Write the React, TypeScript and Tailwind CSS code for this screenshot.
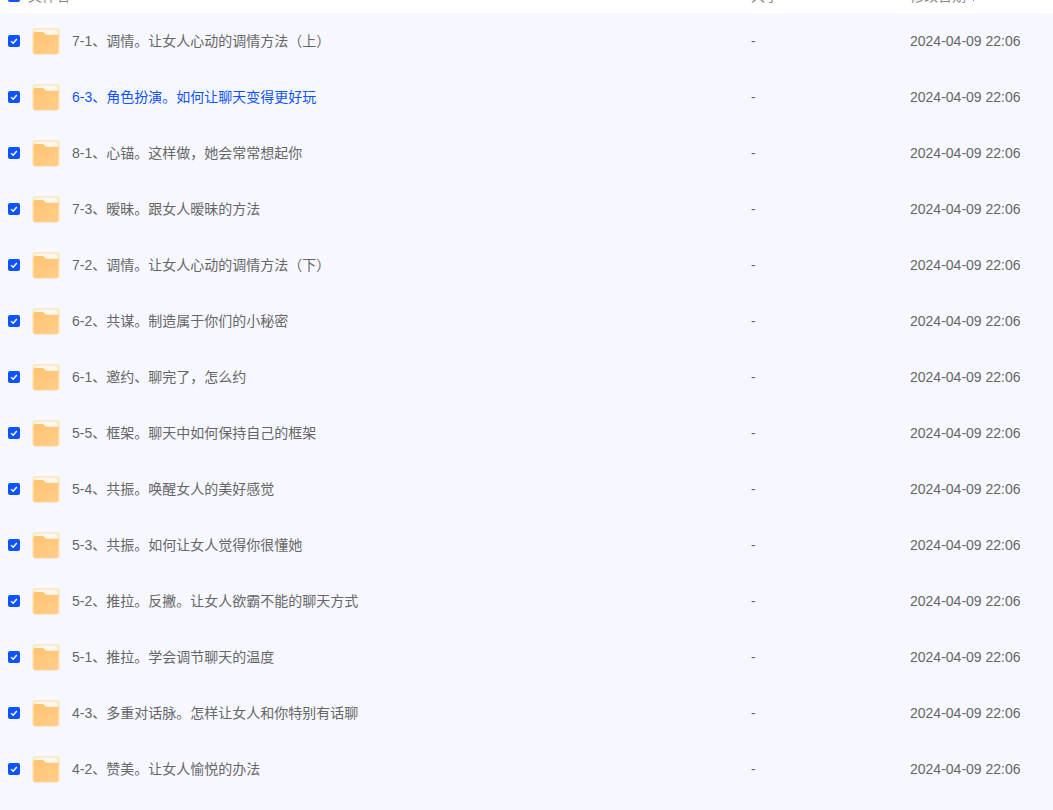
const rows = [
  "7-1、调情。让女人心动的调情方法（上）",
  "6-3、角色扮演。如何让聊天变得更好玩",
  "8-1、心锚。这样做，她会常常想起你",
  "7-3、暧昧。跟女人暧昧的方法",
  "7-2、调情。让女人心动的调情方法（下）",
  "6-2、共谋。制造属于你们的小秘密",
  "6-1、邀约、聊完了，怎么约",
  "5-5、框架。聊天中如何保持自己的框架",
  "5-4、共振。唤醒女人的美好感觉",
  "5-3、共振。如何让女人觉得你很懂她",
  "5-2、推拉。反撇。让女人欲霸不能的聊天方式",
  "5-1、推拉。学会调节聊天的温度",
  "4-3、多重对话脉。怎样让女人和你特别有话聊",
  "4-2、赞美。让女人愉悦的办法",
];

const CheckBox = () => (
  <span className="flex h-3 w-3 shrink-0 items-center justify-center rounded-[2px] bg-[#0d53ff]">
    <svg width="8" height="8" viewBox="0 0 8 8" fill="none">
      <path d="M1.2 4.2 3.2 6.2 6.8 2" stroke="#fff" strokeWidth="1.5" />
    </svg>
  </span>
);

const FolderIcon = () => (
  <svg width="28" height="27" viewBox="0 0 28 27" className="shrink-0">
    <defs>
      <linearGradient id="folderFill" x1="0" y1="0" x2="1" y2="1">
        <stop offset="0" stopColor="#ffc36f" />
        <stop offset="1" stopColor="#ffcf8c" />
      </linearGradient>
    </defs>
    <rect width="28" height="27" rx="4" fill="#ffe9c8" />
    <path d="M4 4a2 2 0 0 1 2-2h17a2 2 0 0 1 2 2v5H4z" fill="#fff8ee" />
    <path
      d="M1.500 6a2 2 0 0 1 2-2h6.500c1.500 0 2 .7 3 1.700.7.700 1.300 1 2.300 1h11.200v16.800a2.500 2.500 0 0 1-2.500 2.500h-20a2.500 2.500 0 0 1-2.500-2.500z"
      fill="url(#folderFill)"
    />
  </svg>
);

export default function App() {
  return (
    <div className="h-[810px] overflow-hidden bg-[#f7f8ff] font-['Liberation_Sans','Noto_Sans_CJK_SC',sans-serif] text-sm text-[#666]">
      {/* table header, scrolled mostly out of view */}
      <div className="-mt-[21px] flex h-[34px] items-center bg-white pl-2 text-[#8c8c8c]">
        <div className="flex flex-1 items-center gap-2">
          <CheckBox />
          <span>文件名</span>
        </div>
        <div className="w-[159px]">大小</div>
        <div className="flex w-[143px] items-center gap-1">
          <span>修改日期</span>
          <svg width="7" height="6" viewBox="0 0 7 6" className="translate-y-[2px]">
            <path d="M0 1h7L3.500 6z" fill="#555" />
          </svg>
        </div>
      </div>
      {rows.map((name, i) => (
        <div key={name} className="flex h-14 items-center border-b border-[#f4f5fb] pl-2 pt-px">
          <div className="flex flex-1 items-center">
            <CheckBox />
            <span className="ml-3">
              <FolderIcon />
            </span>
            <span className={`ml-3 ${i === 1 ? "text-[#0d53ff]" : ""}`}>{name}</span>
          </div>
          <div className="w-[159px]">-</div>
          <div className="w-[143px]">2024-04-09 22:06</div>
        </div>
      ))}
    </div>
  );
}
